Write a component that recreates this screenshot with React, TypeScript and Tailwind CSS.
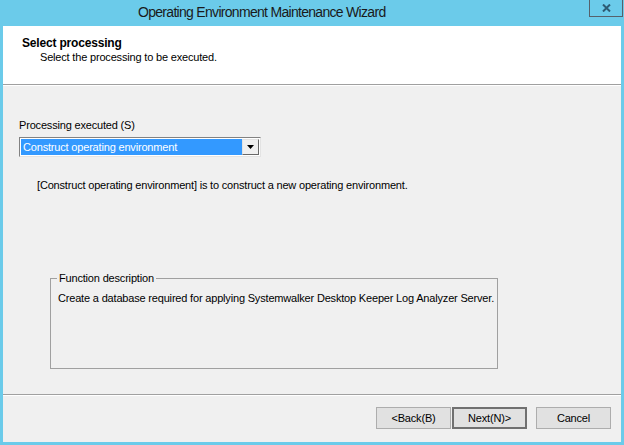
import React from 'react';

// Classic Win32 wizard dialog
const font = { fontFamily: '"Liberation Sans", Arial, sans-serif' };

const Button: React.FC<{ label: string; primary?: boolean; className?: string }> = ({ label, primary, className }) => (
  <button
    className={
      'h-[22px] w-[75px] text-[11px] text-black bg-[#e1e1e1] flex items-center justify-center ' +
      (primary ? 'border-2 border-[#707070] ' : 'border border-[#adadad] ') +
      (className || '')
    }
  >
    {label}
  </button>
);

const App: React.FC = () => {
  return (
    <div className="w-[624px] h-[445px] bg-[#6bcbea] flex flex-col overflow-hidden" style={font}>
      {/* Title bar */}
      <div className="relative h-[26px] shrink-0 flex items-center pl-[138px]">
        <span className="text-[14px] text-[#1a1a1a] tracking-[-0.7px] pb-[1px] whitespace-nowrap">Operating Environment Maintenance Wizard</span>
        <div className="absolute top-0 right-[1px] w-[34px] h-[17px] border border-[#56616b] border-t-0 flex items-center justify-center">
          <svg width="9" height="8" viewBox="0 0 9 8">
            <path d="M1 0.5 L8 7.5 M8 0.5 L1 7.5" stroke="#2d5b73" strokeWidth="2" />
          </svg>
        </div>
      </div>

      {/* Client area */}
      <div className="flex-1 mx-[3px] mb-[3px] bg-[#f0f0f0] flex flex-col text-[11px] tracking-[-0.18px] text-black">
        {/* Header */}
        <div className="h-[58px] bg-white pl-[19px] pt-[10px] shrink-0">
          <div className="font-bold text-[12px] leading-[14px]">Select processing</div>
          <div className="pl-[18px] leading-[14px]">Select the processing to be executed.</div>
        </div>
        <div className="h-px bg-[#a0a0a0]" />
        <div className="h-px bg-white" />

        {/* Body */}
        <div className="flex-1 pl-[16px] pt-[33px]">
          <div className="leading-[13px]">Processing executed (S)</div>
          <div className="mt-[5px] w-[242px] h-[20px] border border-[#828282] border-r-[#e3e3e3] border-b-[#e3e3e3] flex p-[1px] bg-white">
            <div className="flex-1 bg-[#3399ff] text-white leading-[16px] pl-[2px] whitespace-nowrap">Construct operating environment</div>
            <div className="w-[17px] h-[16px] bg-[#f0f0f0] border border-[#e3e3e3] border-r-[#696969] border-b-[#696969] flex items-center justify-center">
              <svg width="7" height="4" viewBox="0 0 7 4">
                <path d="M0 0 H7 L3.5 4 Z" fill="#000" />
              </svg>
            </div>
          </div>
          <div className="mt-[22px] pl-[18px] leading-[13px] whitespace-nowrap">
            [Construct operating environment] is to construct a new operating environment.
          </div>

          {/* Group box */}
          <div className="relative mt-[86px] ml-[31px] w-[448px] h-[91px] border border-[#a0a0a0]">
            <span className="absolute -top-[7px] left-[6px] bg-[#f0f0f0] px-[2px] leading-[13px] whitespace-nowrap">Function description</span>
            <div className="pt-[13px] pl-[7px] leading-[13px] whitespace-nowrap">
              Create a database required for applying Systemwalker Desktop Keeper Log Analyzer Server.
            </div>
          </div>
        </div>

        {/* Footer */}
        <div className="h-px bg-[#a0a0a0]" />
        <div className="h-px bg-white" />
        <div className="h-[46px] shrink-0 flex items-start justify-end pt-[11px] pr-[10px]">
          <Button label="<Back(B)" />
          <Button label="Next(N)>" primary className="ml-px" />
          <Button label="Cancel" className="ml-[9px]" />
        </div>
      </div>
    </div>
  );
};

export default App;
